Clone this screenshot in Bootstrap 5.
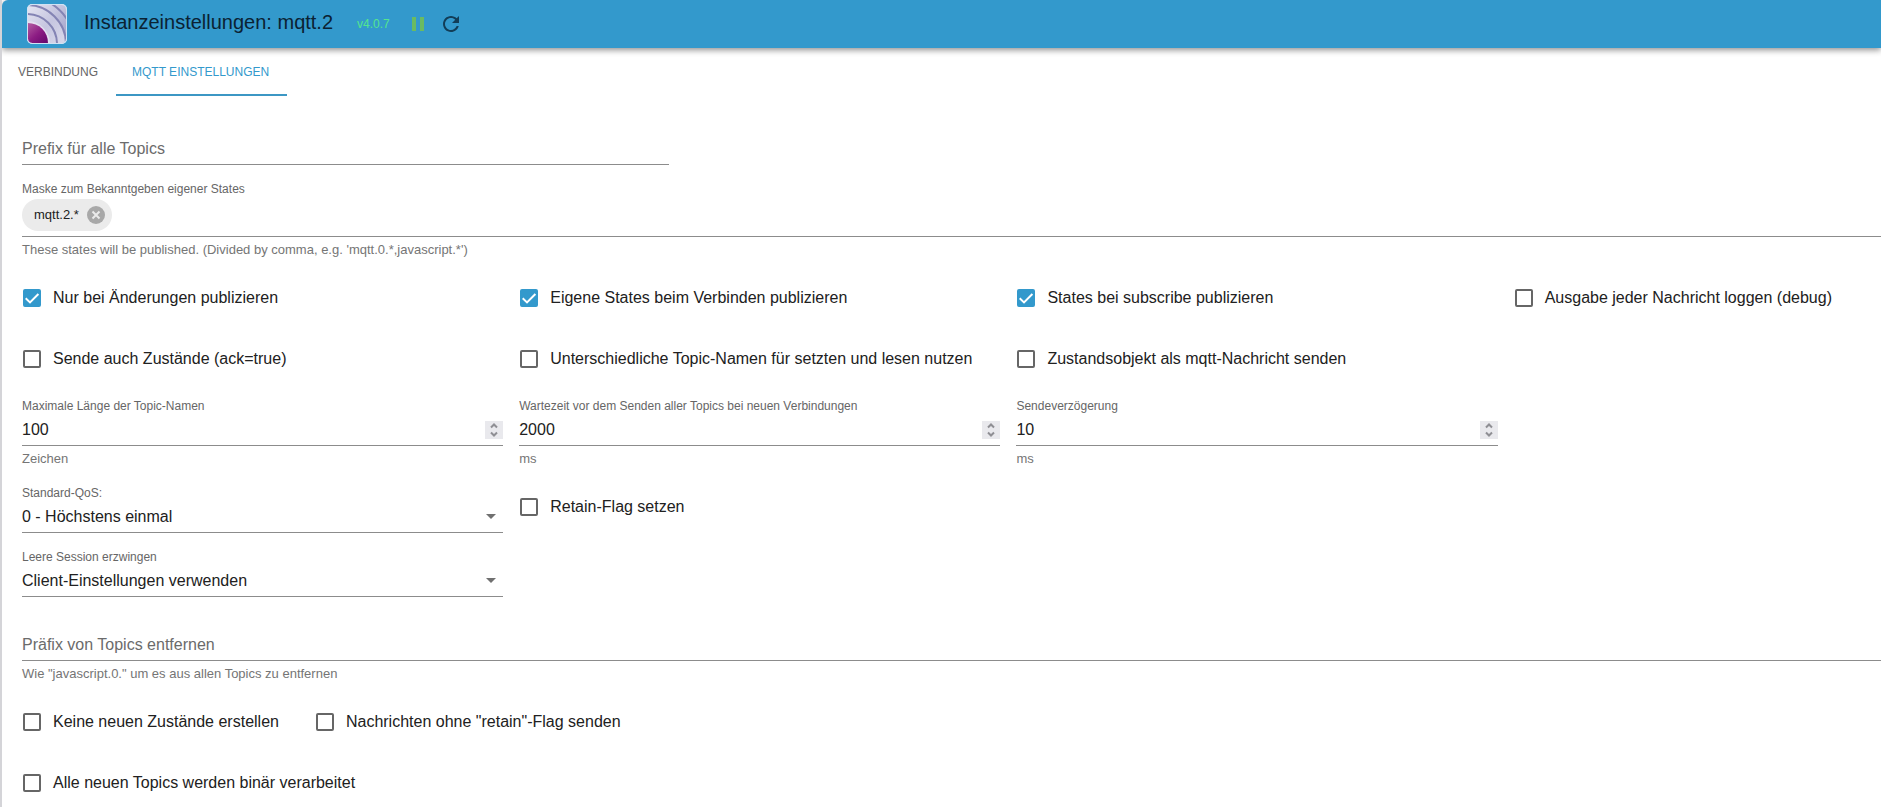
<!DOCTYPE html>
<html lang="de">
<head>
<meta charset="utf-8">
<meta name="viewport" content="width=device-width, initial-scale=1">
<title>Instanzeinstellungen: mqtt.2</title>
<link href="https://cdn.jsdelivr.net/npm/bootstrap@5.3.0/dist/css/bootstrap.min.css" rel="stylesheet">
<style>
  body { font-family: "Liberation Sans", Arial, sans-serif; font-size: 16px; color: #212121; background: #fff; }
  .settings-window { border-left: 2px solid #d4d4d8; overflow-x: hidden; }
  .title-bar { height: 48px; background: #3399cc; border-top-left-radius: 6px; padding-left: 25px; box-shadow: 0 2px 6px rgba(0,0,0,.45); }
  .title-bar h1 { font-size: 20px; line-height: 24px; color: #0b2233; margin: 0 24px 4px 17px; }
  .version { font-size: 12px; line-height: 16px; color: #53e58e; margin-right: 16px; }
  .icon-btn { display: flex; padding: 0; border: 0; background: none; }
  .tab-strip .nav-link { height: 48px; margin: 0; padding: 2px 18px 0 16px; border: 0; border-bottom: 2px solid transparent; border-radius: 0; font-size: 12px; color: #666; text-transform: uppercase; }
  .tab-strip .nav-link.active { color: #3399cc; background: transparent; border-bottom-color: #3c97c4; }
  .settings-form { padding: 37px 0 3px 20px; }
  .half-width { width: 34.8%; }
  .field-label { display: block; font-size: 12px; line-height: 16px; color: #666; }
  .field-help { font-size: 13px; line-height: 16px; color: #757575; margin-top: 5px; }
  .field-line { display: flex; align-items: center; height: 32px; border-bottom: 1px solid #8c8c8c; }
  .field-input { width: 100%; min-width: 0; height: 31px; padding: 0; border: 0; border-radius: 0; background-color: transparent; font-size: 16px; line-height: 24px; color: #212121; outline: 0; appearance: none; }
  .field-input::placeholder { color: #6b6b6b; opacity: 1; }
  .field-input[type=number] { -moz-appearance: textfield; appearance: textfield; }
  .field-input::-webkit-inner-spin-button { display: none; }
  select.field-input { background: url("data:image/svg+xml,%3Csvg xmlns='http://www.w3.org/2000/svg' viewBox='0 0 10 5'%3E%3Cpath d='M0 0h10L5 5z' fill='%23707070'/%3E%3C/svg%3E") no-repeat right 7px center / 10px 5px; }
  .spin-btn { flex: none; background: #e9e9ed; }
  .chip-line { height: auto; padding: 2px 0 5px; }
  .mask-chip { height: 32px; padding: 0 7px 0 12px; gap: 8px; border-radius: 16px; background: #ebebeb; font-size: 13px; }
  .option-grid { display: grid; grid-template-columns: 1.31fr 1.31fr 1.31fr 1fr; gap: 18px 16px; align-items: start; }
  .section-gap { margin-top: 18px; }
  .section-gap-lg { margin-top: 32px; }
  .option-rows { gap: 18px; }
  .option-line { gap: 36px; }
  .option { display: flex; align-items: center; min-height: 43px; padding-left: 1px; gap: 12px; line-height: 24px; white-space: nowrap; }
  .option .form-check-input { flex: none; width: 18px; height: 18px; margin: 0; border: 2px solid #666; border-radius: 2px; background-color: #fff; }
  .option .form-check-input:checked { border-color: #3399cc; background-color: #3399cc; background-size: 18px 18px; background-position: center; background-image: url("data:image/svg+xml,%3Csvg xmlns='http://www.w3.org/2000/svg' viewBox='0 0 18 18'%3E%3Cpath d='M2.7 9.3 7 13.4 15.4 5' fill='none' stroke='%23fff' stroke-width='2'/%3E%3C/svg%3E"); }
</style>
</head>
<body>
<div class="settings-window min-vh-100">
  <header class="title-bar d-flex align-items-center">
    <svg width="40" height="40" viewBox="0 0 40 40" aria-hidden="true">
      <defs>
        <linearGradient id="silver" x1="0" y1="0" x2="1" y2="1"><stop offset="0" stop-color="#e6e6f3"/><stop offset="1" stop-color="#9c9cc6"/></linearGradient>
        <linearGradient id="ring" gradientUnits="userSpaceOnUse" x1="2" y1="4" x2="38" y2="38"><stop offset="0" stop-color="#e2e2f0"/><stop offset=".5" stop-color="#c6c6e0"/><stop offset="1" stop-color="#d8d8ea"/></linearGradient>
        <linearGradient id="violet" gradientUnits="userSpaceOnUse" x1="2" y1="20" x2="18" y2="38"><stop offset="0" stop-color="#b0579f"/><stop offset=".55" stop-color="#8c1c83"/><stop offset="1" stop-color="#6c0b70"/></linearGradient>
        <clipPath id="tile"><rect x="1" y="1" width="38" height="38" rx="4"/></clipPath>
      </defs>
      <rect width="40" height="40" rx="5" fill="#dce7f5"/>
      <g clip-path="url(#tile)">
        <rect x="1" y="1" width="38" height="38" fill="url(#silver)"/>
        <circle cx="0" cy="40" r="47" fill="none" stroke="#8484b4" stroke-width="2"/>
        <circle cx="0" cy="40" r="39" fill="url(#ring)" stroke="#8484b4" stroke-width="2"/>
        <circle cx="0" cy="40" r="30" fill="url(#ring)" stroke="#8484b4" stroke-width="2"/>
        <circle cx="0" cy="40" r="23" fill="#e4e0f0"/>
        <circle cx="1" cy="39" r="20" fill="url(#violet)"/>
      </g>
      <rect x=".5" y=".5" width="39" height="39" rx="5" fill="none" stroke="#cfe2f3"/>
    </svg>
    <h1 class="fw-normal">Instanzeinstellungen: mqtt.2</h1>
    <span class="version">v4.0.7</span>
    <button class="icon-btn" type="button" aria-label="Pause">
      <svg width="24" height="24" viewBox="0 0 24 24" fill="#6abb61"><path d="M6 19h4V5H6v14zm8-14v14h4V5h-4z"/></svg>
    </button>
    <button class="icon-btn ms-2" type="button" aria-label="Neu laden">
      <svg width="26" height="24" viewBox="0 0 24 24" fill="#123d57"><path d="M17.65 6.35C16.2 4.9 14.21 4 12 4c-4.42 0-7.99 3.58-7.99 8s3.57 8 7.99 8c3.73 0 6.84-2.55 7.73-6h-2.08c-.82 2.33-3.04 4-5.65 4-3.31 0-6-2.69-6-6s2.69-6 6-6c1.66 0 3.14.69 4.22 1.78L13 11h7V4l-2.35 2.35z"/></svg>
    </button>
  </header>

  <nav class="tab-strip nav nav-tabs border-0" role="tablist">
    <button class="nav-link" type="button" role="tab">Verbindung</button>
    <button class="nav-link active" type="button" role="tab" aria-selected="true">MQTT Einstellungen</button>
  </nav>

  <form class="settings-form">
    <div class="field-line half-width mb-3">
      <input class="field-input" type="text" placeholder="Prefix für alle Topics" aria-label="Prefix für alle Topics">
    </div>

    <div>
      <label class="field-label" for="mask">Maske zum Bekanntgeben eigener States</label>
      <div class="field-line chip-line">
        <span class="mask-chip d-inline-flex align-items-center">mqtt.2.*
          <button class="icon-btn" type="button" aria-label="Entfernen">
            <svg width="18" height="18" viewBox="0 0 18 18"><circle cx="9" cy="9" r="9" fill="#a8a8a8"/><path d="m5.5 5.5 7 7m0-7-7 7" stroke="#ebebeb" stroke-width="2"/></svg>
          </button>
        </span>
        <input class="field-input flex-fill w-auto" type="text" id="mask">
      </div>
      <div class="field-help">These states will be published. (Divided by comma, e.g. 'mqtt.0.*,javascript.*')</div>
    </div>

    <div class="option-grid section-gap">
      <label class="option"><input class="form-check-input" type="checkbox" checked>Nur bei Änderungen publizieren</label>
      <label class="option"><input class="form-check-input" type="checkbox" checked>Eigene States beim Verbinden publizieren</label>
      <label class="option"><input class="form-check-input" type="checkbox" checked>States bei subscribe publizieren</label>
      <label class="option"><input class="form-check-input" type="checkbox">Ausgabe jeder Nachricht loggen (debug)</label>

      <label class="option"><input class="form-check-input" type="checkbox">Sende auch Zustände (ack=true)</label>
      <label class="option"><input class="form-check-input" type="checkbox">Unterschiedliche Topic-Namen für setzten und lesen nutzen</label>
      <label class="option"><input class="form-check-input" type="checkbox">Zustandsobjekt als mqtt-Nachricht senden</label>
      <span></span>

      <div>
        <label class="field-label" for="maxlen">Maximale Länge der Topic-Namen</label>
        <div class="field-line">
          <input class="field-input" type="number" id="maxlen" value="100">
          <svg class="spin-btn" width="18" height="18" viewBox="0 0 18 18" fill="none" stroke="#8f8f94" stroke-width="2"><path d="m6 6.5 3-3 3 3m-6 5 3 3 3-3"/></svg>
        </div>
        <div class="field-help">Zeichen</div>
      </div>
      <div>
        <label class="field-label" for="wait">Wartezeit vor dem Senden aller Topics bei neuen Verbindungen</label>
        <div class="field-line">
          <input class="field-input" type="number" id="wait" value="2000">
          <svg class="spin-btn" width="18" height="18" viewBox="0 0 18 18" fill="none" stroke="#8f8f94" stroke-width="2"><path d="m6 6.5 3-3 3 3m-6 5 3 3 3-3"/></svg>
        </div>
        <div class="field-help">ms</div>
      </div>
      <div>
        <label class="field-label" for="delay">Sendeverzögerung</label>
        <div class="field-line">
          <input class="field-input" type="number" id="delay" value="10">
          <svg class="spin-btn" width="18" height="18" viewBox="0 0 18 18" fill="none" stroke="#8f8f94" stroke-width="2"><path d="m6 6.5 3-3 3 3m-6 5 3 3 3-3"/></svg>
        </div>
        <div class="field-help">ms</div>
      </div>
      <span></span>

      <div>
        <div class="mb-3">
          <label class="field-label" for="qos">Standard-QoS:</label>
          <div class="field-line">
            <select class="field-input" id="qos"><option>0 - Höchstens einmal</option></select>
          </div>
        </div>
        <label class="field-label" for="session">Leere Session erzwingen</label>
        <div class="field-line">
          <select class="field-input" id="session"><option>Client-Einstellungen verwenden</option></select>
        </div>
      </div>
      <label class="option"><input class="form-check-input" type="checkbox">Retain-Flag setzen</label>
    </div>

    <div class="section-gap-lg">
      <div class="field-line">
        <input class="field-input" type="text" placeholder="Präfix von Topics entfernen" aria-label="Präfix von Topics entfernen">
      </div>
      <div class="field-help">Wie "javascript.0." um es aus allen Topics zu entfernen</div>
    </div>

    <div class="option-rows section-gap d-flex flex-column">
      <div class="option-line d-flex">
        <label class="option"><input class="form-check-input" type="checkbox">Keine neuen Zustände erstellen</label>
        <label class="option"><input class="form-check-input" type="checkbox">Nachrichten ohne "retain"-Flag senden</label>
      </div>
      <label class="option"><input class="form-check-input" type="checkbox">Alle neuen Topics werden binär verarbeitet</label>
    </div>
  </form>
</div>
<script src="https://cdn.jsdelivr.net/npm/bootstrap@5.3.0/dist/js/bootstrap.bundle.min.js"></script>
</body>
</html>
